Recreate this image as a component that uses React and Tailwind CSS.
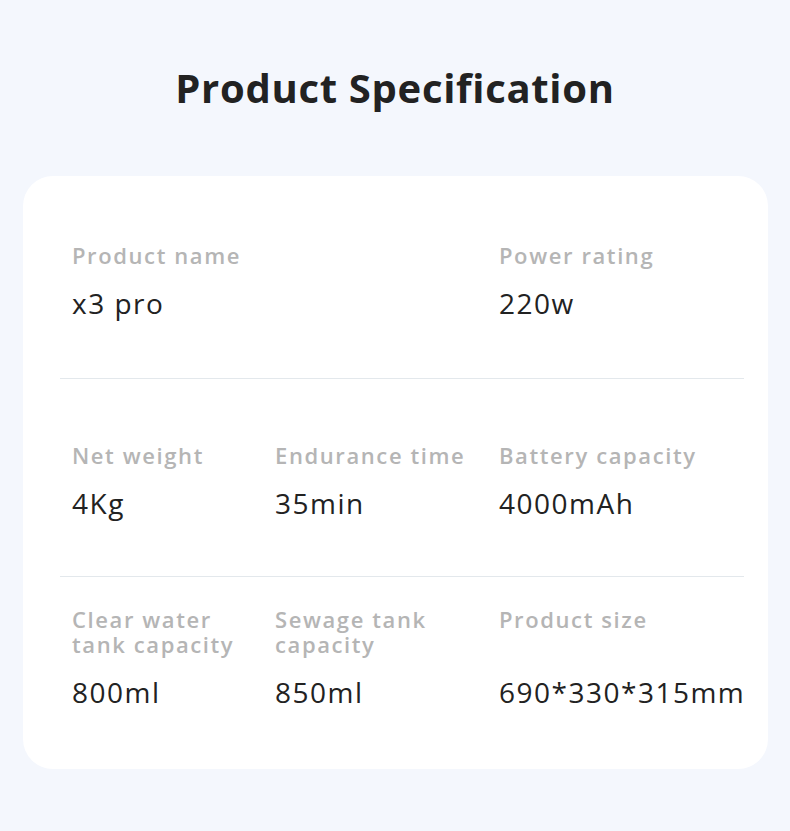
import React from 'react';

const rows = [
  {
    items: [
      { label: 'Product name', value: 'x3 pro', span: true },
      { label: 'Power rating', value: '220w' },
    ],
    pad: 'pt-[67px] pb-[58px]',
  },
  {
    items: [
      { label: 'Net weight', value: '4Kg' },
      { label: 'Endurance time', value: '35min' },
      { label: 'Battery capacity', value: '4000mAh' },
    ],
    pad: 'pt-[64px] pb-[56px]',
  },
  {
    items: [
      { label: ['Clear water', 'tank capacity'], value: '800ml' },
      { label: ['Sewage tank', 'capacity'], value: '850ml' },
      { label: 'Product size', value: '690*330*315mm' },
    ],
    pad: 'pt-[30px] pb-[60px]',
  },
];

const SpecItem = ({ label, value, span }) => (
  <div className={`flex flex-col ${span ? 'col-span-2' : ''}`}>
    <div className="text-[22px] leading-[25px] font-semibold text-[#b5b5b5] tracking-[1.6px] whitespace-nowrap">
      {Array.isArray(label) ? label.map((l) => <div key={l}>{l}</div>) : label}
    </div>
    <div className="mt-auto pt-[18px] text-[28px] leading-[34px] text-[#222] tracking-[1.5px] whitespace-nowrap">
      {value}
    </div>
  </div>
);

export default function App() {
  return (
    <div
      className="min-h-[831px] w-full bg-[#f4f7fd] pt-[60px] pb-[61px]"
      style={{ fontFamily: '"Open Sans", sans-serif' }}
    >
      <h1 className="text-center text-[40px] leading-[56px] font-bold text-[#222] tracking-[0.7px]">
        Product Specification
      </h1>

      <div className="mt-[60px] ml-[23px] mr-[22px] rounded-[30px] bg-white pl-[37px] pr-[24px]">
        {rows.map((row, i) => (
          <div
            key={i}
            className={`grid grid-cols-[203px_224px_1fr] pl-[12px] ${row.pad} ${
              i < rows.length - 1 ? 'border-b border-[#e3e8ec]' : ''
            }`}
          >
            {row.items.map((item, j) => (
              <SpecItem key={j} {...item} />
            ))}
          </div>
        ))}
      </div>
    </div>
  );
}
